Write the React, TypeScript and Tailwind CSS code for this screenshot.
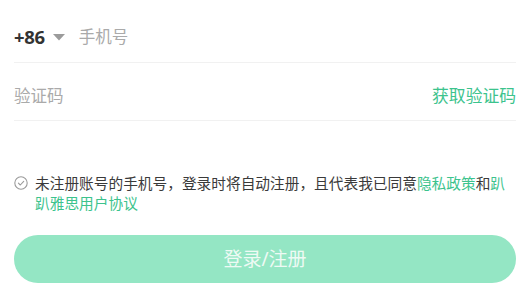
import React from "react";

const font = { fontFamily: '"Noto Sans", "Noto Sans CJK SC", sans-serif' };

const CheckCircle = () => (
  <svg width="14" height="14" viewBox="0 0 14 14" className="mt-[3px] shrink-0">
    <circle cx="7" cy="7" r="6.2" fill="none" stroke="#9a9a9a" strokeWidth="1.1" />
    <path d="M4.4 7.2 L6.3 9 L9.7 5.3" fill="none" stroke="#9a9a9a" strokeWidth="1.1" strokeLinecap="round" strokeLinejoin="round" />
  </svg>
);

export default function App() {
  return (
    <div className="w-[524px] h-[293px] bg-white pl-[14px] pr-[8px]" style={font}>
      <div className="flex items-center pt-[25px] pb-[13px] border-b border-[#f1f1f1] h-[63px]">
        <span className="text-[18.5px] font-bold text-[#333] leading-6 tracking-[-0.3px]">+86</span>
        <svg width="12" height="7" viewBox="0 0 12 7" className="ml-[8px]">
          <path d="M0 0 H12 L6 6.5 Z" fill="#9b9b9b" />
        </svg>
        <span className="ml-[14px] text-[16.5px] text-[#aaaaaa] leading-6">手机号</span>
      </div>
      <div className="flex items-center justify-between pt-[21px] pb-[12px] border-b border-[#f1f1f1] h-[58px]">
        <span className="text-[16.5px] text-[#aaaaaa] leading-6">验证码</span>
        <span className="text-[16.8px] text-[#3cc38d] leading-6">获取验证码</span>
      </div>
      <div className="flex gap-[7px] mt-[52px]">
        <CheckCircle />
        <p className="text-[14.7px] leading-[20px] text-[#3a3a3a]">
          未注册账号的手机号，登录时将自动注册，且代表我已同意<span className="text-[#3cc38d]">隐私政策</span>和<span className="text-[#3cc38d]">趴趴雅思用户协议</span>
        </p>
      </div>
      <button className="mt-[22px] w-full h-[48px] rounded-full bg-[#94e6c4] text-[19px] text-[#eefaf4]">
        登录/注册
      </button>
    </div>
  );
}
